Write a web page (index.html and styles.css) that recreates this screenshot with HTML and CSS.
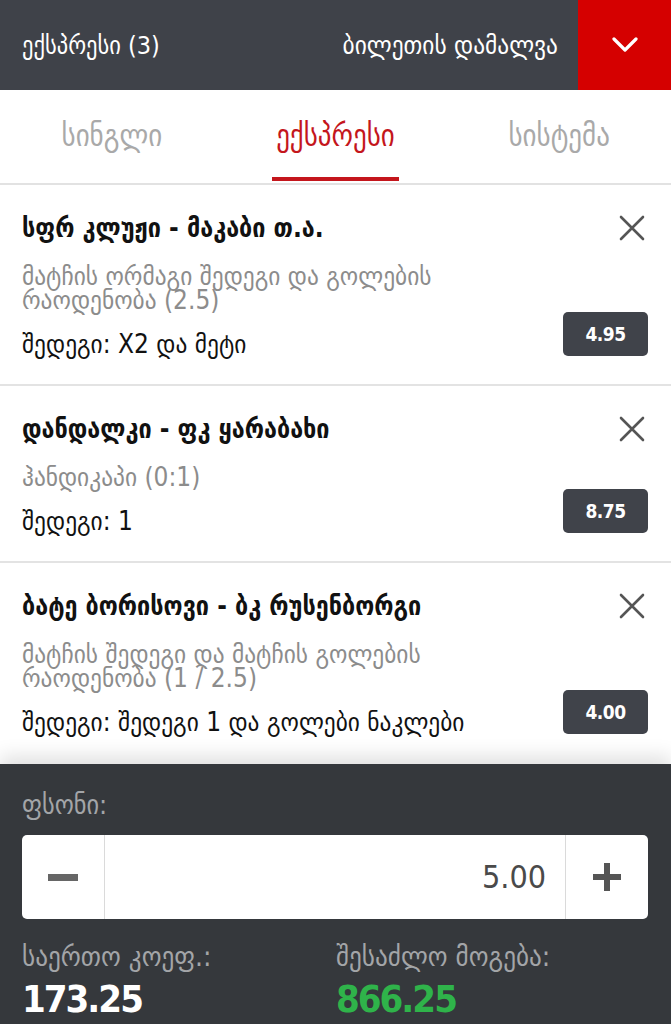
FILE: index.html
```html
<!DOCTYPE html>
<html lang="ka">
<head>
<meta charset="utf-8">
<link rel="stylesheet" href="styles.css">
</head>
<body>
<div class="app">
  <header class="topbar">
    <div class="topbar-title">ექსპრესი (3)</div>
    <div class="topbar-hide">ბილეთის დამალვა</div>
    <div class="topbar-toggle">
      <svg width="26" height="16" viewBox="0 0 26 16"><path d="M2 2 L13 13 L24 2" fill="none" stroke="#fff" stroke-width="3.2" stroke-linecap="round" stroke-linejoin="round"/></svg>
    </div>
  </header>

  <nav class="tabs">
    <div class="tab">სინგლი</div>
    <div class="tab tab-active"><span class="tab-label">ექსპრესი</span></div>
    <div class="tab">სისტემა</div>
  </nav>

  <section class="bets">
    <article class="bet">
      <div class="bet-main">
        <div class="bet-title">სფრ კლუჟი - მაკაბი თ.ა.</div>
        <div class="bet-market">მატჩის ორმაგი შედეგი და გოლების რაოდენობა (2.5)</div>
        <div class="bet-pick">შედეგი: X2 და მეტი</div>
      </div>
      <div class="bet-side">
        <svg class="close" width="26" height="26" viewBox="0 0 26 26"><path d="M2 2 L24 24 M24 2 L2 24" stroke="#555" stroke-width="2.6" stroke-linecap="round"/></svg>
        <div class="odds">4.95</div>
      </div>
    </article>
    <article class="bet">
      <div class="bet-main">
        <div class="bet-title">დანდალკი - ფკ ყარაბახი</div>
        <div class="bet-market">ჰანდიკაპი (0:1)</div>
        <div class="bet-pick">შედეგი: 1</div>
      </div>
      <div class="bet-side">
        <svg class="close" width="26" height="26" viewBox="0 0 26 26"><path d="M2 2 L24 24 M24 2 L2 24" stroke="#555" stroke-width="2.6" stroke-linecap="round"/></svg>
        <div class="odds">8.75</div>
      </div>
    </article>
    <article class="bet bet-last">
      <div class="bet-main">
        <div class="bet-title">ბატე ბორისოვი - ბკ რუსენბორგი</div>
        <div class="bet-market">მატჩის შედეგი და მატჩის გოლების რაოდენობა (1 / 2.5)</div>
        <div class="bet-pick">შედეგი: შედეგი 1 და გოლები ნაკლები</div>
      </div>
      <div class="bet-side">
        <svg class="close" width="26" height="26" viewBox="0 0 26 26"><path d="M2 2 L24 24 M24 2 L2 24" stroke="#555" stroke-width="2.6" stroke-linecap="round"/></svg>
        <div class="odds">4.00</div>
      </div>
    </article>
  </section>

  <section class="panel">
    <div class="panel-label">ფსონი:</div>
    <div class="stake">
      <div class="stake-btn stake-minus"><span class="minus-bar"></span></div>
      <div class="stake-value">5.00</div>
      <div class="stake-btn stake-plus">
        <svg width="32" height="32" viewBox="0 0 32 32"><path d="M16 2 V30 M2 16 H30" stroke="#555" stroke-width="6"/></svg>
      </div>
    </div>
    <div class="totals">
      <div class="total">
        <div class="total-label">საერთო კოეფ.:</div>
        <div class="total-value">173.25</div>
      </div>
      <div class="total">
        <div class="total-label">შესაძლო მოგება:</div>
        <div class="total-value total-win">866.25</div>
      </div>
    </div>
  </section>
</div>
</body>
</html>
```

FILE: styles.css
```css
* { box-sizing: border-box; }
html, body {
  margin: 0;
  padding: 0;
  background: #35383c;
}
body {
  font-family: "DejaVu Sans Condensed", "DejaVu Sans", sans-serif;
  font-stretch: condensed;
  width: 671px;
  height: 1024px;
  overflow: hidden;
}
.app {
  display: flex;
  flex-direction: column;
}
.topbar {
  display: flex;
  align-items: center;
  height: 90px;
  background: #3f4249;
  color: #fff;
  font-size: 25px;
}
.topbar-title {
  flex: 1;
  padding-left: 22px;
}
.topbar-hide {
  padding-right: 20px;
  font-size: 26px;
}
.topbar-toggle {
  width: 93px;
  height: 90px;
  background: #d50000;
  display: flex;
  align-items: center;
  justify-content: center;
}
.tabs {
  display: grid;
  grid-template-columns: 1fr 1fr 1fr;
  height: 95px;
  background: #fff;
  border-bottom: 2px solid #e2e2e2;
}
.tab {
  display: flex;
  align-items: center;
  justify-content: center;
  color: #a9a9a9;
  font-size: 30px;
  padding-bottom: 2px;
}
.tab-active {
  color: #c4161c;
  align-items: stretch;
}
.tab-label {
  display: flex;
  align-items: center;
  padding: 4px 4px 0;
  border-bottom: 4px solid #c4161c;
}
.bets {
  background: #fff;
}
.bet {
  display: flex;
  padding: 28px 23px 28px 22px;
  border-bottom: 2px solid #e3e3e3;
}
.bet-last {
  border-bottom: none;
  padding-bottom: 30px;
}
.bet-main {
  flex: 1;
  min-width: 0;
}
.bet-title {
  font-weight: bold;
  font-size: 26px;
  line-height: 30px;
  color: #111;
}
.bet-market {
  margin-top: 21px;
  font-size: 26px;
  line-height: 24px;
  color: #8c8c8c;
  max-width: 450px;
}
.bet-pick {
  margin-top: 20px;
  font-size: 26px;
  line-height: 24px;
  color: #111;
}
.bet-side {
  display: flex;
  flex-direction: column;
  align-items: flex-end;
  justify-content: space-between;
}
.close {
  margin-top: 2px;
  margin-right: 3px;
}
.odds {
  width: 85px;
  height: 44px;
  border-radius: 5px;
  background: #40434a;
  color: #fff;
  font-weight: bold;
  font-size: 19px;
  letter-spacing: -0.5px;
  display: flex;
  align-items: center;
  justify-content: center;
}
.panel {
  position: relative;
  background: #35383c;
  padding: 28px 23px 0 22px;
  box-shadow: 0 -8px 18px rgba(0, 0, 0, 0.12);
  height: 264px;
}
.panel-label {
  font-size: 27px;
  line-height: 26px;
  color: #a3a5a8;
}
.stake {
  margin-top: 17px;
  display: flex;
  height: 84px;
  background: #fff;
  border-radius: 5px;
}
.stake-btn {
  width: 83px;
  display: flex;
  align-items: center;
  justify-content: center;
}
.stake-minus {
  border-right: 1px solid #dadada;
}
.stake-plus {
  border-left: 1px solid #dadada;
}
.minus-bar {
  width: 30px;
  height: 7px;
  background: #666;
}
.stake-value {
  flex: 1;
  display: flex;
  align-items: center;
  justify-content: flex-end;
  padding-right: 19px;
  font-size: 32px;
  color: #4a4a4a;
}
.totals {
  display: grid;
  grid-template-columns: 314px 1fr;
  margin-top: 25px;
}
.total-label {
  font-size: 28px;
  line-height: 26px;
  color: #a3a5a8;
}
.total-value {
  margin-top: 9px;
  font-weight: bold;
  font-size: 38px;
  line-height: 40px;
  color: #fff;
  letter-spacing: -2px;
}
.total-win {
  color: #2fb34a;
}
```
